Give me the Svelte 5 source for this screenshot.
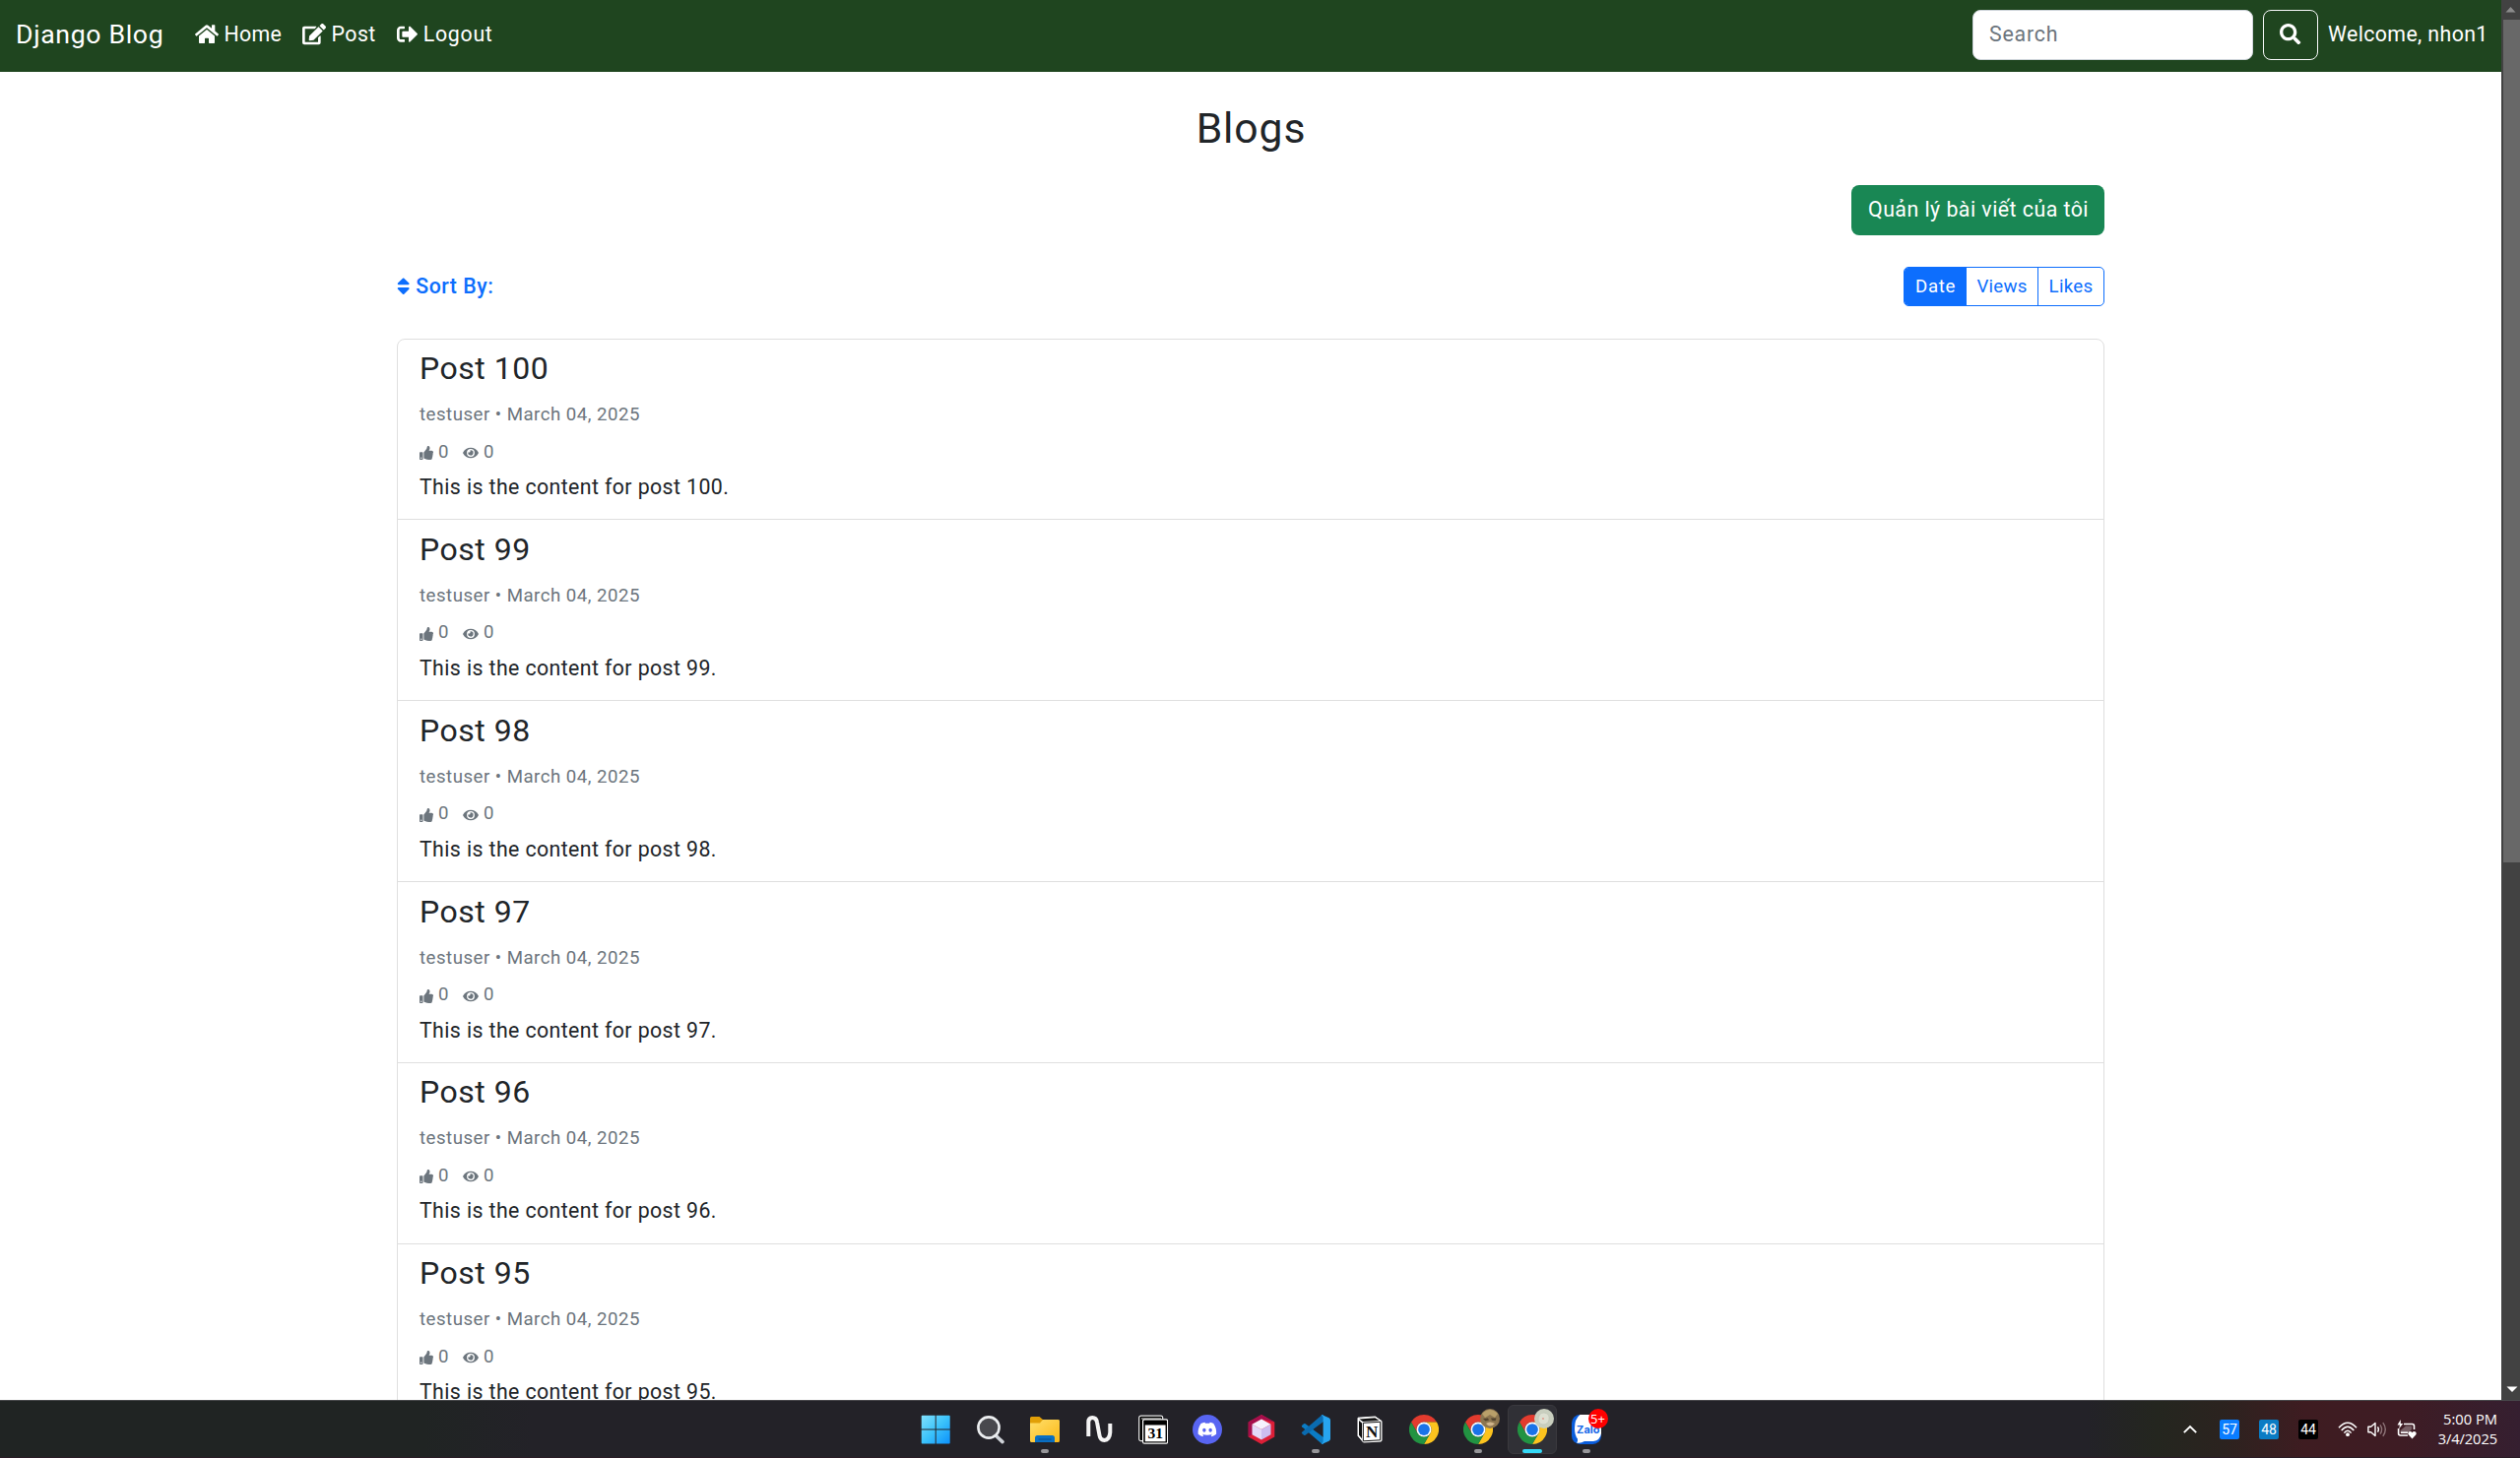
<script>
  const posts = [100, 99, 98, 97, 96, 95];
  const icons = {
    home: [576, 'M280.37 148.26L96 300.11V464a16 16 0 0 0 16 16l112.06-.29a16 16 0 0 0 15.92-16V368a16 16 0 0 1 16-16h64a16 16 0 0 1 16 16v95.64a16 16 0 0 0 16 16.05L464 480a16 16 0 0 0 16-16V300L295.67 148.26a12.19 12.19 0 0 0-15.3 0zM571.6 251.47L488 182.56V44.05a12 12 0 0 0-12-12h-56a12 12 0 0 0-12 12v72.61L318.47 43a48 48 0 0 0-61 0L4.34 251.47a12 12 0 0 0-1.6 16.9l25.5 31A12 12 0 0 0 45.15 301l235.22-193.74a12.19 12.19 0 0 1 15.3 0L530.9 301a12 12 0 0 0 16.9-1.6l25.5-31a12 12 0 0 0-1.7-16.93z'],
    edit: [576, 'M402.6 83.2l90.2 90.2c3.8 3.8 3.8 10 0 13.8L274.4 405.6l-92.8 10.3c-12.4 1.4-22.9-9.1-21.5-21.5l10.3-92.8L388.8 83.2c3.8-3.8 10-3.8 13.8 0zm162-22.9l-48.8-48.8c-15.2-15.2-39.9-15.2-55.2 0l-35.4 35.4c-3.8 3.8-3.8 10 0 13.8l90.2 90.2c3.8 3.8 10 3.8 13.8 0l35.4-35.4c15.2-15.3 15.2-40 0-55.2zM384 346.2V448H64V128h229.8c3.2 0 6.2-1.3 8.5-3.5l40-40c7.6-7.6 2.2-20.5-8.5-20.5H48C21.5 64 0 85.5 0 112v352c0 26.5 21.5 48 48 48h352c26.5 0 48-21.5 48-48V306.2c0-10.7-12.9-16-20.5-8.5l-40 40c-2.2 2.3-3.5 5.3-3.5 8.5z'],
    logout: [512, 'M497 273L329 441c-15 15-41 4.5-41-17v-96H152c-13.3 0-24-10.7-24-24v-96c0-13.3 10.7-24 24-24h136V88c0-21.4 25.9-32 41-17l168 168c9.3 9.4 9.3 24.6 0 34zM192 436v-40c0-6.6-5.4-12-12-12H96c-17.7 0-32-14.3-32-32V160c0-17.7 14.3-32 32-32h84c6.6 0 12-5.4 12-12V76c0-6.6-5.4-12-12-12H96c-53 0-96 43-96 96v192c0 53 43 96 96 96h84c6.6 0 12-5.4 12-12z'],
    search: [512, 'M505 442.7L405.3 343c-4.5-4.5-10.6-7-17-7H372c27.6-35.3 44-79.7 44-128C416 93.1 322.9 0 208 0S0 93.1 0 208s93.1 208 208 208c48.3 0 92.7-16.4 128-44v16.3c0 6.4 2.5 12.5 7 17l99.7 99.7c9.4 9.4 24.6 9.4 33.9 0l28.3-28.3c9.4-9.4 9.4-24.6.1-34zM208 336c-70.7 0-128-57.2-128-128 0-70.7 57.2-128 128-128 70.7 0 128 57.2 128 128 0 70.7-57.2 128-128 128z'],
    sort: [320, 'M41 288h238c21.4 0 32.1 25.9 17 41L177 448c-9.4 9.4-24.6 9.4-33.9 0L24 329c-15.1-15.1-4.4-41 17-41zm255-105L177 64c-9.4-9.4-24.6-9.4-33.9 0L24 183c-15.1 15.1-4.4 41 17 41h238c21.4 0 32.1-25.9 17-41z'],
    like: [512, 'M104 224H24c-13.255 0-24 10.745-24 24v240c0 13.255 10.745 24 24 24h80c13.255 0 24-10.745 24-24V248c0-13.255-10.745-24-24-24zM64 472c-13.255 0-24-10.745-24-24s10.745-24 24-24 24 10.745 24 24-10.745 24-24 24zM384 81.452c0 42.416-25.97 66.208-33.277 94.548h101.723c33.397 0 59.397 27.746 59.553 58.098.084 17.938-7.546 37.249-19.439 49.197l-.11.11c9.836 23.337 8.237 56.037-9.308 79.469 8.681 25.895-.069 57.704-16.382 74.757 4.298 17.598 2.244 32.575-6.148 44.632C440.202 511.587 389.616 512 346.839 512l-2.845-.001c-48.287-.017-87.806-17.598-119.56-31.725-15.957-7.099-36.821-15.887-52.651-16.178-6.54-.12-11.783-5.457-11.783-11.998v-213.77c0-3.2 1.282-6.271 3.558-8.521 39.614-39.144 56.648-80.587 89.117-113.111 14.804-14.832 20.188-37.236 25.393-58.902C282.515 39.293 291.817 0 312 0c24 0 72 8 72 81.452z'],
    eye: [576, 'M572.52 241.4C518.29 135.59 410.93 64 288 64S57.68 135.64 3.48 241.41a32.35 32.35 0 0 0 0 29.19C57.71 376.41 165.07 448 288 448s230.32-71.64 284.52-177.41a32.35 32.35 0 0 0 0-29.19zM288 400a144 144 0 1 1 144-144 143.93 143.93 0 0 1-144 144zm0-240a95.31 95.31 0 0 0-25.31 3.79 47.85 47.85 0 0 1-66.9 66.9A95.78 95.78 0 1 0 288 160z'],
  };
</script>

{#snippet icon(name)}
  <svg class="icon {name}" viewBox="0 0 {icons[name][0]} 512" fill="currentColor"><path d={icons[name][1]} /></svg>
{/snippet}

{#snippet chrome()}
  <svg class="app" viewBox="0 0 48 48">
    <path fill="#e33b2e" d="M3.215 12A24 24 0 0 1 44.785 12L24 12A12 12 0 0 0 13.608 30Z" />
    <path fill="#fcc31e" d="M44.785 12A24 24 0 0 1 24 48L34.392 30A12 12 0 0 0 24 12Z" />
    <path fill="#229342" d="M24 48A24 24 0 0 1 3.215 12L13.608 30A12 12 0 0 0 34.392 30Z" />
    <circle cx="24" cy="24" r="12" fill="#fff" />
    <circle cx="24" cy="24" r="9.4" fill="#1a73e8" />
  </svg>
{/snippet}

<div class="screen">
  <div class="viewport">
    <div class="page">
      <nav class="navbar">
        <a class="brand" href="#top">Django Blog</a>
        <a class="link home-link" href="#home">{@render icon('home')}<span>Home</span></a>
        <a class="link post-link" href="#post">{@render icon('edit')}<span>Post</span></a>
        <a class="link logout-link" href="#logout">{@render icon('logout')}<span>Logout</span></a>
        <form class="search-form">
          <input type="text" placeholder="Search" />
          <button type="button" aria-label="Search">{@render icon('search')}</button>
        </form>
        <span class="welcome">Welcome, nhon1</span>
      </nav>

      <main class="container">
        <h1>Blogs</h1>
        <div class="manage"><a href="#manage">Quản lý bài viết của tôi</a></div>
        <div class="sorting">
          <div class="sort-label">{@render icon('sort')}<span>Sort By:</span></div>
          <div class="group">
            <a class="active date" href="#date">Date</a>
            <a class="views" href="#views">Views</a>
            <a class="likes" href="#likes">Likes</a>
          </div>
        </div>
        <div class="list">
          {#each posts as n}
            <article>
              <h2>Post {n}</h2>
              <div class="meta">testuser • March 04, 2025</div>
              <div class="stats">{@render icon('like')}<span class="count">0</span>{@render icon('eye')}<span>0</span></div>
              <p>This is the content for post {n}.</p>
            </article>
          {/each}
        </div>
      </main>
    </div>
    <div class="scrollbar">
      <svg viewBox="0 0 19 20"><path d="M4.5 12.5L9.5 7L14.5 12.5Z" fill="#8b8b8b" /></svg>
      <div class="thumb"></div>
      <svg class="down" viewBox="0 0 19 20"><path d="M5.5 6.5H16.5L11 12Z" fill="#fff" /></svg>
    </div>
  </div>

  <footer class="taskbar">
    <div class="apps">
      <div class="cell">
        <svg class="app start" viewBox="0 0 30 30">
          <defs><linearGradient id="win" gradientUnits="userSpaceOnUse" x1="0" y1="0" x2="30" y2="30"><stop offset="0" stop-color="#85e2fc" /><stop offset=".5" stop-color="#3cc3fb" /><stop offset="1" stop-color="#0a8ffb" /></linearGradient></defs>
          <path fill="url(#win)" d="M1.5 .8H14.7V14.6H.7V1.6Q.7.8 1.5.8ZM15.7.8H28.9Q29.7.8 29.7 1.6V14.6H15.7ZM.7 15.6H14.7V29.6H1.5Q.7 29.6.7 28.8ZM15.7 15.6H29.7V28.8Q29.7 29.6 28.9 29.6H15.7Z" />
        </svg>
      </div>
      <div class="cell">
        <svg class="app" viewBox="0 0 30 30" fill="none">
          <path d="M20 21L27 27.6" stroke="#cfd3d8" stroke-width="3.6" stroke-linecap="round" />
          <circle cx="13" cy="13" r="10.6" fill="#48484d" stroke="#eceef0" stroke-width="2.6" />
        </svg>
      </div>
      <div class="cell">
        <svg class="app" viewBox="0 0 30 30">
          <defs><linearGradient id="fold" x1="0" y1="0" x2="1" y2="1"><stop offset="0" stop-color="#ffdf6c" /><stop offset="1" stop-color="#fbb917" /></linearGradient></defs>
          <path fill="#e19f07" d="M0 3.5Q0 2 1.5 2H9.5L13 5H28Q30 5 30 7V14H0Z" />
          <path fill="url(#fold)" d="M0 8.5H10L13 5H28.5Q30 5 30 6.5V26.5Q30 28 28.5 28H1.5Q0 28 0 26.5Z" />
          <path fill="#0a6fc2" d="M5 28V23.5Q5 21 7.5 21H22.5Q25 21 25 23.5V28Z" />
          <path d="M8.5 25H21.5" stroke="#064c8c" stroke-width="1" />
        </svg>
        <i class="mark"></i>
      </div>
      <div class="cell">
        <svg class="app" viewBox="0 0 30 30" fill="none" stroke="#f5f5f5" stroke-width="4">
          <path d="M4.3 22V7.5Q4.3 3 8.3 3Q12.3 3 13 7.5L15.6 21.5Q16.4 26 20.3 26Q25.8 25.5 26.3 18V9" />
        </svg>
      </div>
      <div class="cell">
        <svg class="app" viewBox="0 0 30 30">
          <rect x=".7" y="1.2" width="24" height="25.5" rx="2" fill="#000" stroke="#e8e8e8" stroke-width="1.2" />
          <path d="M3 4H23" stroke="#e8e8e8" stroke-width="1" />
          <rect x="4.6" y="4.8" width="25" height="24.4" rx="1.5" fill="#000" stroke="#fff" stroke-width="1.2" />
          <rect x="6.8" y="10.5" width="20.8" height="16.8" fill="#fff" />
          <text x="17.2" y="24.2" text-anchor="middle" class="cal">31</text>
        </svg>
      </div>
      <div class="cell">
        <svg class="app" viewBox="0 0 30 30">
          <circle cx="15" cy="15" r="15" fill="#5865f2" />
          <path fill="#fff" transform="translate(5.6 5.6) scale(.785)" d="M20.317 4.3698a19.79 19.79 0 0 0-4.885-1.515c-.211.375-.444.864-.608 1.25a18.27 18.27 0 0 0-5.487 0c-.164-.393-.406-.875-.618-1.25A19.74 19.74 0 0 0 3.677 4.37C.533 9.046-.32 13.58.099 18.058a19.9 19.9 0 0 0 5.993 3.03c.462-.63.874-1.295 1.226-1.994a13.1 13.1 0 0 1-1.872-.892c.126-.094.252-.192.372-.292a14.2 14.2 0 0 0 12.062 0c.12.098.246.198.373.292a12.3 12.3 0 0 1-1.873.892c.36.698.772 1.362 1.225 1.993a19.84 19.84 0 0 0 6.002-3.03c.5-5.177-.838-9.674-3.548-13.66zM8.02 15.331c-1.183 0-2.157-1.086-2.157-2.419s.955-2.419 2.157-2.419c1.21 0 2.176 1.095 2.157 2.419 0 1.333-.956 2.419-2.157 2.419zm7.975 0c-1.183 0-2.157-1.086-2.157-2.419s.955-2.419 2.157-2.419c1.21 0 2.176 1.095 2.157 2.419 0 1.333-.946 2.419-2.157 2.419z" />
        </svg>
      </div>
      <div class="cell">
        <svg class="app" viewBox="0 0 30 30">
          <path fill="#dc1f37" d="M15 0L28.3 7.5V22.5L15 30L1.7 22.5V7.5Z" />
          <path fill="#a50e4c" d="M15 0L1.7 7.5V22.5L6 20V9.5L15 4.5L28.3 7.5Z" />
          <path fill="#f6f2fd" d="M15 4.5L24.5 9.7L15 15L5.5 9.7Z" />
          <path fill="#e3d9f8" d="M5.5 9.7L15 15V25.5L5.5 20.2Z" />
          <path fill="#cdbdf0" d="M24.5 9.7L15 15V25.5L24.5 20.2Z" />
        </svg>
      </div>
      <div class="cell">
        <svg class="app" viewBox="0 0 30 30">
          <path fill="#0b7cc4" d="M1 11L3 9.2Q3.8 8.7 4.6 9.2L23 23V30L20.8 29.3L1.1 12.3Q.4 11.6 1 11Z" />
          <path fill="#0a6bb0" d="M1 19L3 20.8Q3.8 21.3 4.6 20.8L23 7V0L20.8.7L1.1 17.7Q.4 18.4 1 19Z" />
          <path fill="#27a5f0" d="M21.8.2L28.6 3.2Q30 3.9 30 5.4V24.6Q30 26.1 28.6 26.8L21.8 29.8Q20.8 29.8 20.6 29Q22.6 29.4 22.6 27V3Q22.6.6 20.6 1Q20.8.2 21.8.2Z" />
        </svg>
        <i class="mark"></i>
      </div>
      <div class="cell">
        <svg class="app" viewBox="0 0 30 30">
          <path d="M3 3.2L20.5 2L27 6.5V26Q27 27 26 27.1L8.5 28L3 21.5Z" fill="#fff" stroke="#fff" stroke-width="1" stroke-linejoin="round" />
          <path d="M4.3 4.4L20.3 3.2L24.5 6L8 7Z M4 6L7 8.6V24.2L4 20.7Z" fill="#111" />
          <path d="M8.3 8.3L25.7 7.3V25.8L8.3 26.8Z" fill="#fff" stroke="#111" stroke-width="1" />
          <text x="17.1" y="23.3" text-anchor="middle" class="notion">N</text>
        </svg>
      </div>
      <div class="cell">{@render chrome()}</div>
      <div class="cell">
        {@render chrome()}
        <svg class="badge" viewBox="0 0 20 20">
          <circle cx="10" cy="10" r="10" fill="#8d7650" />
          <path d="M2 5Q10-3 18 5L15 9L10 6L5 9Z" fill="#b9a06a" />
          <path d="M3 10L8 9.4L9 11.6L5.5 12.6ZM11 9.4L16.5 9.6L15.5 12.2L12 11.8Z" fill="#54452f" />
          <path d="M6 15Q10 12 15 15Q10 20 6 15Z" fill="#d0b58b" />
        </svg>
        <i class="mark"></i>
      </div>
      <div class="cell current">
        {@render chrome()}
        <svg class="badge" viewBox="0 0 20 20">
          <circle cx="10" cy="10" r="10" fill="#c9cfbf" />
          <path d="M4 12Q4 4 10 4Q16 5 15 11Q14 16 9 16Q5 16 4 12Z" fill="#dde0d2" stroke="#bcc2b3" stroke-width=".6" />
          <circle cx="9" cy="10" r="1.1" fill="#dfa093" />
        </svg>
        <i class="mark active-mark"></i>
      </div>
      <div class="cell">
        <svg class="app" viewBox="0 0 30 30">
          <rect width="30" height="30" rx="8.5" fill="#0a5ddc" />
          <path fill="#fff" d="M8.5 0H21.5Q30 0 30 8.5V19Q29 26 22 27H13Q9 29.5 5 28.5Q6.5 27 6 24.5Q3 21 3 14Q3 4 8.5 0Z" />
          <text x="16.8" y="18.5" text-anchor="middle" class="zalo">Zalo</text>
        </svg>
        <span class="badge count-badge">5+</span>
        <i class="mark"></i>
      </div>
    </div>

    <div class="tray">
      <svg class="chevron" viewBox="0 0 14 10" fill="none" stroke="#fff" stroke-width="1.9"><path d="M.8 8.2L7 2L13.2 8.2" /></svg>
      <span class="temp blue">57</span>
      <span class="temp teal">48</span>
      <span class="temp black">44</span>
      <svg class="tray-icon" viewBox="0 0 20 20" fill="none" stroke="#fff" stroke-width="1.5">
        <path d="M1 8.3Q10-2 19 8.3M3.7 11Q10 3.3 16.3 11M6.4 13.6Q10 8.7 13.6 13.6" />
        <circle cx="10" cy="15.2" r="1.9" fill="#fff" stroke="none" />
      </svg>
      <svg class="tray-icon" viewBox="0 0 20 20" fill="none" stroke="#fff" stroke-width="1.4">
        <path d="M.9 7.2H3.6L8 3.5V16.5L3.6 12.8H.9Z" stroke-linejoin="round" />
        <path d="M10.5 7.4Q12.3 10 10.5 12.6" />
        <path d="M13 5.3Q16.2 10 13 14.7M15.8 3.2Q20.8 10 15.8 16.8" stroke="#8d7377" />
      </svg>
      <svg class="tray-icon" viewBox="0 0 20 20" fill="none" stroke="#fff" stroke-width="1.6">
        <path d="M7 4.5H15.5Q17.5 4.5 17.5 6.5V10M1.6 9V14Q1.6 16 3.5 16H11" />
        <path d="M3.5 14V11L9 6.5H15V10L11 14Z" fill="#fff" stroke="none" opacity=".3" />
        <path d="M4 13.2H11" />
        <path d="M3.8 0L.5 5.6H3L2 9.5L6.2 4H3.8Z" fill="#fff" stroke="none" />
        <path d="M15.5 19.5L11.8 15.6Q10.6 13.6 12.4 12.3Q14.3 11.5 15.5 13.2Q16.7 11.5 18.6 12.3Q20.4 13.6 19.2 15.6Z" fill="#fff" stroke="none" />
      </svg>
      <div class="clock"><span>5:00 PM</span><span class="day">3/4/2025</span></div>
    </div>
  </footer>
</div>

<style>
  :global(body) { margin: 0; overflow: hidden; background: #fff; }
  * { box-sizing: border-box; }
  a { color: inherit; text-decoration: none; }
  svg { display: block; flex: none; }
  .screen { width: 2559px; height: 1481px; display: flex; flex-direction: column; overflow: hidden; font-family: Roboto, 'Liberation Sans', sans-serif; font-size: 21.33px; color: #212529; }
  .viewport { height: 1422px; display: flex; overflow: hidden; }
  .page { width: 2540px; height: 1422px; overflow: hidden; }

  .navbar { height: 73px; padding: 10px 16px 12px; display: flex; align-items: center; background: #1f451f; color: #fff; white-space: nowrap; line-height: 30px; }
  .brand { width: 182px; font-size: 26.67px; letter-spacing: .65px; padding-bottom: 1px; }
  .link { display: flex; align-items: center; padding-bottom: 1px; }
  .link .icon { height: 21.3px; margin-right: 5.5px; }
  .home, .edit { width: 24px; }
  .logout { width: 21.3px; }
  .home-link { width: 109px; letter-spacing: .3px; }
  .post-link { width: 96px; letter-spacing: .45px; }
  .logout-link { letter-spacing: .7px; }
  .search-form { display: flex; margin-left: auto; gap: 10px; }
  .search-form input { width: 285px; height: 51px; border: 1px solid #ced4da; border-radius: 8px; background: #fff; padding: 0 16px 2px; font: inherit; letter-spacing: .8px; color: #212529; outline: none; }
  .search-form input::placeholder { color: #6c757d; opacity: 1; }
  .search-form button { width: 56px; height: 51px; border: 1px solid #f8f9fa; border-radius: 8px; background: none; color: #fff; padding: 0 0 2px; display: flex; align-items: center; justify-content: center; }
  .search { width: 21.3px; height: 21.3px; }
  .welcome { width: 160px; margin-left: 10px; letter-spacing: .38px; padding-bottom: 1px; }

  .container { width: 1734px; margin: 0 auto; }
  h1 { margin: 0; padding-top: 31px; height: 115px; line-height: 52px; font-size: 42.67px; font-weight: 400; letter-spacing: .9px; text-indent: 1px; text-align: center; }
  .manage { display: flex; justify-content: flex-end; }
  .manage a { width: 257px; height: 51px; border-radius: 8px; background: #198754; color: #fff; text-align: center; text-indent: 1px; line-height: 49px; letter-spacing: .47px; }
  .sorting { display: flex; justify-content: space-between; align-items: center; margin-top: 32px; height: 40px; color: #0d6efd; }
  .sort-label { display: flex; align-items: center; padding-bottom: 1px; font-weight: 500; letter-spacing: .5px; }
  .sort { width: 13.3px; height: 21.3px; margin-right: 6px; }
  .group { display: flex; width: 204px; height: 40px; border: 1px solid #0d6efd; border-radius: 5px; overflow: hidden; font-size: 18.67px; line-height: 38.5px; text-align: center; }
  .date { width: 63px; background: #0d6efd; color: #fff; letter-spacing: .6px; }
  .views { width: 73px; border-right: 1px solid #0d6efd; letter-spacing: .25px; }
  .likes { flex: 1; letter-spacing: .3px; }

  .list { margin-top: 32.5px; border: 1px solid #dfdfdf; border-radius: 8px; }
  article { height: 183.85px; padding: 8.5px 22px 0; border-bottom: 1px solid #dfdfdf; }
  h2 { margin: 0; height: 42px; line-height: 42px; font-size: 32px; font-weight: 400; letter-spacing: .5px; }
  .meta { height: 51px; line-height: 52px; font-size: 18.67px; letter-spacing: .48px; color: #6c757d; }
  .stats { height: 25px; display: flex; align-items: center; font-size: 18.67px; line-height: 25px; color: #6c757d; }
  .stats span { padding-top: 1px; }
  .stats .icon { height: 14px; margin-top: 3px; }
  .like { width: 14px; margin-right: 5px; }
  .count { margin-right: 14.5px; }
  .eye { width: 16px; margin-right: 5px; }
  article p { margin: 0; height: 47px; line-height: 47.5px; letter-spacing: .39px; }

  .scrollbar { width: 19px; height: 1422px; background: #424242; display: flex; flex-direction: column; }
  .scrollbar svg { width: 19px; height: 20px; }
  .thumb { height: 856px; margin-left: 2px; background: #686868; }
  .scrollbar .down { margin-top: auto; }

  .taskbar { height: 59px; display: flex; justify-content: space-between; align-items: center; padding: 0 24px 0 923px; border-top: 1px solid #48484b; border-bottom: 1px solid #2a1c26; background: linear-gradient(90deg, #202423 0, #202423 430px, #232228 540px, #232228 2120px, #24261f 2190px, #2b231f 2255px, #3e1c21 2340px, #3e1c24 2440px, #351f30 2559px); }
  .apps { display: flex; }
  .cell { width: 55px; height: 50px; position: relative; display: flex; align-items: center; justify-content: center; }
  .app { width: 30px; height: 30px; }
  .start { margin-right: 2px; }
  .current { width: 50px; margin: 0 2.5px; border: 1px solid #3a393e; border-radius: 6px; background: #303036; }
  .mark { position: absolute; bottom: 1px; width: 8px; height: 4px; border-radius: 2px; background: #97969a; }
  .active-mark { width: 20px; background: #35d9f7; bottom: 0; }
  .badge { position: absolute; left: 50%; margin-left: 2px; top: 4px; width: 20px; height: 20px; }
  .current .badge { top: 3px; }
  .count-badge { border-radius: 10px; background: #f00; color: #fff; font: 13px/20px 'Open Sans', sans-serif; text-align: center; }
  .cal { font: bold 15.5px 'Liberation Serif', serif; fill: #000; }
  .notion { font: bold 17px 'Liberation Serif', serif; fill: #111; }
  .zalo { font: 700 11px Inter, sans-serif; fill: #1668e8; }

  .tray { display: flex; align-items: center; color: #fff; }
  .chevron { width: 14px; height: 10px; margin-right: 23px; }
  .temp { width: 20px; height: 20px; margin-right: 20px; border-radius: 2px; font: 14px/21px Roboto, sans-serif; text-align: center; letter-spacing: -.2px; }
  .blue { background: #0a7dff; }
  .teal { background: #0a7cc4; }
  .black { background: #000; }
  .tray-icon { width: 20px; height: 20px; margin-right: 10px; }
  .clock { display: flex; flex-direction: column; align-items: flex-end; width: 72px; margin-right: -1px; padding-bottom: 2px; font: 14.7px/20px 'Open Sans', sans-serif; }
  .day { letter-spacing: -.1px; }
</style>
